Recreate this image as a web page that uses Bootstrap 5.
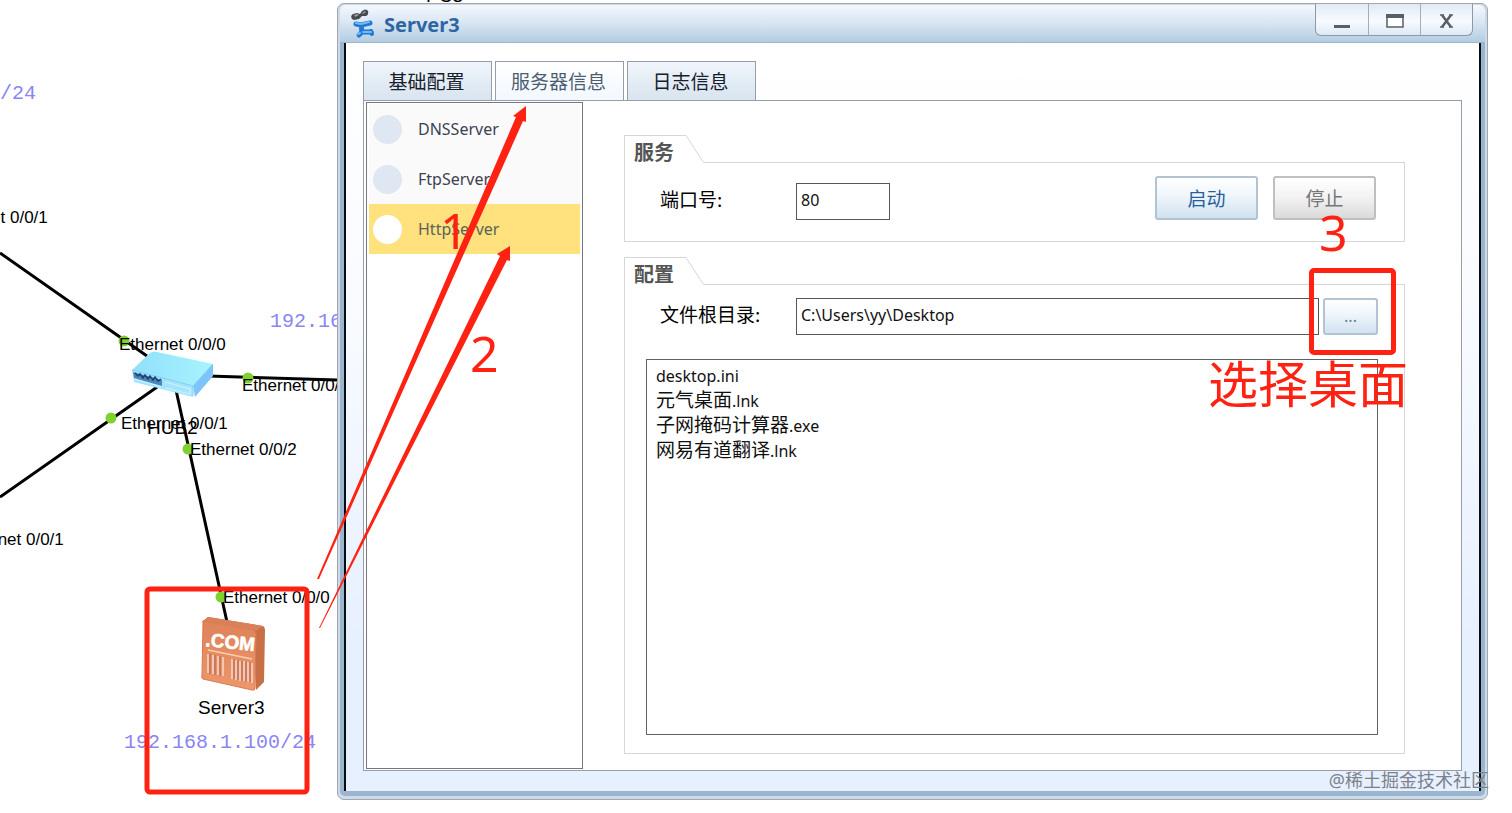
<!DOCTYPE html>
<html lang="zh-CN">
<head>
<meta charset="utf-8">
<meta name="viewport" content="width=device-width, initial-scale=1">
<title>Server3</title>
<link href="https://cdn.jsdelivr.net/npm/bootstrap@5.3.0/dist/css/bootstrap.min.css" rel="stylesheet">
<style>
  body { font-family: "Noto Sans", "Noto Sans CJK SC", sans-serif; font-size: 16px; line-height: 25px; color: #111; background: #fff; }
  .cjk { font-family: "Noto Sans CJK SC", sans-serif; font-size: 19px; line-height: 25px; }
  .latin { font-family: "Noto Sans", sans-serif; font-size: 16px; line-height: 16px; }
  .desk { padding: 3px 24px 13px 337px; }
  .topology, .marks { position: absolute; left: 0; top: 0; pointer-events: none; }
  .topology text { font-family: "Liberation Sans", sans-serif; font-size: 17px; }
  .topology .device { font-size: 19px; }
  .topology .addr { font-family: "Liberation Mono", monospace; font-size: 20px; fill: #8a85f2; }
  .topology .sign { font-size: 19px; font-weight: 700; }
  .marks text { font-family: "Noto Sans", sans-serif; font-size: 50px; }
  .marks { z-index: 5; fill: #ff2213; }

  .win { border: 1px solid #a0a7af; border-radius: 7px; background: #cddbe8; padding: 1px 2px 3px; }
  .win-inner { background: #9ab5cd; padding: 0 4px 5px; border-radius: 5px; }
  .titlebar { height: 38px; margin: 0 -4px; padding-left: 10px; border-radius: 5px 5px 0 0; background: linear-gradient(#f4f8fd, #dbe7f3 45%, #b2cde2); border-bottom: 1px solid #9fb6c9; }
  .titlebar h1 { font-size: 20px; line-height: 39px; font-weight: 700; color: #2e66a3; }
  .caption { height: 32px; margin: -1px 12px 0 0; border: 1px solid #8f99a5; border-top: 0; border-radius: 0 0 6px 6px; background: linear-gradient(#dfeaf5, #f8fbff 55%, #dce9f5); }
  .caption button { width: 52px; border: 0; padding: 0; background: none; }
  .caption button + button { border-left: 1px solid #a4adb8; }
  .client { border: solid #080d12; border-width: 0 2px; padding: 18px 17px 20px; background: linear-gradient(#fff, #f7faff 40%, #e7f0ff 80%); }

  .tabs { gap: 3px; }
  .tabs .nav-link { width: 129px; height: 39px; padding: 0 2px 2px 0; border: 1px solid #989daa; border-bottom: 0; border-radius: 0; color: #16202c; background: linear-gradient(#f0f5fa, #d8e4f0); }
  .tabs .nav-link.active { color: #4c5d70; background: linear-gradient(#fff, #f2f8ff); }
  .pane { border: 1px solid #989da7; background: #fff; }
  .side { width: 217px; margin: 1px 0 1px 2px; border: 1px solid #74777f; border-radius: 0; padding: 1px 2px; flex: none; }
  .side .list-group-item { height: 50px; padding: 0 4px; gap: 16px; border: 0; border-radius: 0; background: #fafafb; color: #3c4250; }
  .side .list-group-item.active { background: #ffe17d; color: #5b6359; margin: 0; }
  .dot { width: 29px; height: 29px; border-radius: 50%; background: #dfe7f2; }
  .active .dot { background: #fff; }

  .forms { padding: 34px 56px 16px 41px; gap: 15px; }
  .group-head { height: 28px; }
  .group-name { width: 62px; padding: 3px 0 0 9px; border: solid #d6d6d6; border-width: 1px 0 0 1px; font-weight: 700; color: #555; white-space: nowrap; }
  .group-name.cjk { font-size: 20px; }
  .group-rule { border-bottom: 1px solid #d6d6d6; }
  .group-body { border: 1px solid #d6d6d6; border-top: 0; padding: 13px 26px 18px 21px; }
  .group-body.service { padding-bottom: 20px; padding-right: 28px; }
  .field-name { width: 150px; padding-left: 14px; line-height: 32px; flex: none; color: #000; }
  .field { height: 37px; padding: 0 4px 3px; border: 1px solid #55575c; border-radius: 0; font-size: 16px; color: #111; background: #fff; }
  .field.port { width: 94px; margin-top: 7px; }
  .port-name { line-height: 45px; }
  .btn-soft { width: 103px; height: 44px; padding: 0 0 2px; border: 2px solid #b3c3d2; border-radius: 3px; color: #275f9d; background: linear-gradient(#fff, #f1f7fb 40%, #d1e2f0); }
  .btn-soft:disabled { opacity: 1; border-color: #bfbfbf; color: #777; background: linear-gradient(#fff, #f2f2f2 50%, #dadada); }
  .btn-browse { width: 55px; height: 37px; font-size: 16px; color: #5d7f9e; display: block; }
  .button-pair { gap: 15px; }
  .files { min-height: 200px; margin-top: 24px; padding: 1px 9px; border: 1px solid #5f6166; }
  .files li { height: 25px; }
  .red-box { position: absolute; left: -14px; top: -30px; width: 87px; height: 87px; border: 5px solid #ff2213; border-radius: 5px; pointer-events: none; }
  .red-num, .red-note { position: absolute; color: #ff2213; font-size: 50px; line-height: 50px; white-space: nowrap; pointer-events: none; }
  .red-num { left: -4px; top: -91px; }
  .red-note { right: -30px; top: 61px; }
  .watermark { position: absolute; right: 23px; bottom: 20px; font-size: 18px; color: #7c828c; white-space: nowrap; z-index: 6; }
</style>
</head>
<body>
<main class="desk position-relative min-vh-100 d-flex overflow-hidden">

  <svg class="topology" width="520" height="813" viewBox="0 0 520 813" role="img" aria-label="网络拓扑">
    <defs>
      <linearGradient id="hubTop" x1="0" x2="1"><stop stop-color="#8fe0fa"/><stop offset="1" stop-color="#a8f3ff"/></linearGradient>
      <linearGradient id="box" x1="0" y1="0" x2="0" y2="1"><stop stop-color="#dd8259"/><stop offset="1" stop-color="#ee976b"/></linearGradient>
    </defs>
    <g stroke="#000" stroke-width="3">
      <path d="M0 253 147 356M0 497 160 385M176 390 227 622M208 376 337 380"/>
    </g>
    <g fill="#7ed12f">
      <circle cx="124" cy="341" r="5.500"/><circle cx="248" cy="378" r="5.500"/><circle cx="111" cy="418" r="5.500"/>
      <circle cx="188" cy="449" r="5.500"/><circle cx="221" cy="597" r="5.500"/>
    </g>
    <g>
      <path fill="url(#hubTop)" d="M132 370 150 353Q153 351 157 352L213 364 193 387Z"/>
      <path fill="#a5e4fd" d="M132 370 193 386 193 397 134 382Z"/>
      <path fill="#7cc4fa" d="M193 386 213 364V376L195 397Z"/>
      <path fill="none" stroke="#86cdf2" d="M132 370 193 386 213 364M193 386V396"/>
      <path fill="#4a86b8" d="M133 372 162 380V386L134 378Z"/>
      <path fill="none" stroke="#1d3f70" stroke-width="1.500" d="M135 373l3 3 2-2 3 4 2-3 3 4 2-3 3 4 2-3 3 4 3-2"/>
      <path fill="none" stroke="#d0f3ff" d="M134 379 162 387M165 382 190 389V394L165 388"/>
    </g>
    <g>
      <path fill="#c96f45" d="M202 622 208 617 263 626Q265 627 265 630L264 682 256 690 253 634Z"/>
      <path fill="url(#box)" stroke="#d97a50" d="M203 622Q202 620 205 621L253 630Q256 631 256 634L255 688Q255 691 252 690L203 679Q201 678 202 674Z"/>
      <path fill="#d98058" d="M203 621 208 617 263 626 256 631Z"/>
      <text class="sign" x="205" y="646" fill="#fff" stroke="#fff" stroke-width=".6" transform="rotate(6 205 646)">.COM</text>
      <path fill="none" stroke="#f9cdb5" stroke-width="1.500" d="M208 650 252 659"/>
      <path stroke="#f5c6b4" stroke-width="2" d="M208 654V673M213 655V674M218 656V675M223 657V676"/>
      <path stroke="#ae6653" d="M210 654V674M215 655V675M220 656V676"/>
      <path stroke="#f5c6b4" stroke-width="2" d="M232 659V679M236 660V680M240 661V681M244 661V681M248 662V682M252 663V683"/>
      <path stroke="#ae6653" d="M234 659V679M238 660V680M242 661V681M246 662V682M250 662V682"/>
    </g>
    <g fill="#000">
      <text x="-59" y="223">Ethernet 0/0/1</text>
      <text x="119" y="350">Ethernet 0/0/0</text>
      <text x="242" y="391">Ethernet 0/0/0</text>
      <text x="121" y="429">Ethernet 0/0/1</text>
      <text x="190" y="455">Ethernet 0/0/2</text>
      <text x="-43" y="545">Ethernet 0/0/1</text>
      <text x="223" y="603">Ethernet 0/0/0</text>
      <text class="device" x="147" y="434">HUB2</text>
      <text class="device" x="198" y="714">Server3</text>
      <text class="device" x="426" y="2">PC3</text>
    </g>
    <text class="addr" x="0" y="99">/24</text>
    <text class="addr" x="270" y="327">192.168</text>
    <text class="addr" x="124" y="748">192.168.1.100/24</text>
  </svg>

  <section class="win position-relative flex-grow-1 d-flex">
    <div class="win-inner flex-grow-1 d-flex flex-column">
      <header class="titlebar d-flex align-items-start">
        <svg width="26" height="30" viewBox="0 0 26 30" class="mt-1 me-1 flex-shrink-0" aria-hidden="true">
          <path fill="#45484c" d="M2 10Q0 7 3 5L7 4 10 5 12 2Q16 -1 18 2 19 6 16 7L12 7 9 10 4 11Z"/>
          <path fill="#9a9da0" d="M4 6 7 5 9 6 5 8ZM12 4 15 2 16 3 13 5Z"/>
          <path fill="none" stroke="#2378d2" stroke-width="5" stroke-linejoin="round" stroke-linecap="round" d="M6 15 11 16 20 14M11 16 12 23 21 23M12 23 9 26"/>
          <path fill="none" stroke="#2378d2" stroke-width="4" stroke-linecap="round" d="M21 22 22 25"/>
          <path fill="none" stroke="#72bbf8" stroke-width="2" stroke-linecap="round" d="M6 14 11 15 19 13M13 23 21 23M8 25 10 24"/>
        </svg>
        <h1 class="m-0 ms-1 flex-grow-1">Server3</h1>
        <div class="caption d-flex">
          <button type="button" aria-label="最小化"><svg width="18" height="18" viewBox="0 0 18 18"><path fill="#5a5f66" d="M1 13h16v3H1z"/></svg></button>
          <button type="button" aria-label="最大化"><svg width="18" height="18" viewBox="0 0 18 18"><path fill="#fff" stroke="#5a5f66" stroke-width="1.500" d="M1 4h16v11H1z"/><path fill="#5a5f66" d="M0 2h18v4H0z"/></svg></button>
          <button type="button" aria-label="关闭"><svg width="18" height="18" viewBox="0 0 18 18"><path fill="none" stroke="#5a5f66" stroke-width="2.500" d="M4 3 13 15M13 3 4 15"/><path stroke="#5a5f66" stroke-width="1.500" d="M2 3h4M11 3h4M2 15h4M11 15h4"/></svg></button>
        </div>
      </header>

      <div class="client flex-grow-1 d-flex flex-column">
        <nav class="tabs nav cjk" role="tablist">
          <button type="button" class="nav-link" role="tab">基础配置</button>
          <button type="button" class="nav-link active" role="tab" aria-selected="true">服务器信息</button>
          <button type="button" class="nav-link" role="tab">日志信息</button>
        </nav>

        <div class="pane flex-grow-1 d-flex">
          <div class="side list-group">
            <a href="#dns" class="list-group-item d-flex align-items-center"><span class="dot"></span>DNSServer</a>
            <a href="#ftp" class="list-group-item d-flex align-items-center"><span class="dot"></span>FtpServer</a>
            <a href="#http" class="list-group-item active d-flex align-items-center"><span class="dot"></span>HttpServer</a>
          </div>

          <form class="forms flex-grow-1 d-flex flex-column">
            <section>
              <div class="group-head d-flex">
                <div class="group-name cjk">服务</div>
                <svg width="18" height="28" viewBox="0 0 18 28" aria-hidden="true"><path fill="none" stroke="#d6d6d6" d="M0 .5 17.500 27.500H18"/></svg>
                <div class="group-rule flex-grow-1"></div>
              </div>
              <div class="group-body service d-flex align-items-start">
                <label for="port" class="field-name port-name cjk">端口号:</label>
                <input id="port" class="field port" type="text" value="80">
                <div class="button-pair d-flex ms-auto">
                  <button type="button" class="btn btn-soft cjk">启动</button>
                  <button type="button" class="btn btn-soft cjk" disabled>停止</button>
                </div>
              </div>
            </section>

            <section class="flex-grow-1 d-flex flex-column">
              <div class="group-head d-flex">
                <div class="group-name cjk">配置</div>
                <svg width="18" height="28" viewBox="0 0 18 28" aria-hidden="true"><path fill="none" stroke="#d6d6d6" d="M0 .5 17.500 27.500H18"/></svg>
                <div class="group-rule flex-grow-1"></div>
              </div>
              <div class="group-body flex-grow-1 d-flex flex-column">
                <div class="d-flex">
                  <label for="root" class="field-name cjk">文件根目录:</label>
                  <input id="root" class="field flex-grow-1" type="text" value="C:\Users\yy\Desktop">
                  <div class="position-relative ms-1">
                    <button type="button" class="btn btn-soft btn-browse">...</button>
                    <span class="red-box"></span>
                    <span class="red-num">3</span>
                    <span class="red-note">选择桌面</span>
                  </div>
                </div>
                <ul class="files list-unstyled mb-0 flex-grow-1 cjk">
                  <li><span class="latin">desktop.ini</span></li>
                  <li>元气桌面<span class="latin">.lnk</span></li>
                  <li>子网掩码计算器<span class="latin">.exe</span></li>
                  <li>网易有道翻译<span class="latin">.lnk</span></li>
                </ul>
              </div>
            </section>
          </form>
        </div>
      </div>
    </div>
  </section>

  <svg class="marks" width="560" height="813" viewBox="0 0 560 813" aria-hidden="true">
    <path d="M317 579 516 117 513 116 526 106 526 122 523 121 319 579Z"/>
    <path d="M319 628 500 256 497 254 510 246 510 261 507 260 320 628Z"/>
    <rect x="147" y="589" width="160" height="203" rx="3" fill="none" stroke="#ff2213" stroke-width="5"/>
    <text x="440" y="249">1</text>
    <text x="470" y="372">2</text>
  </svg>

  <span class="watermark">@稀土掘金技术社区</span>
</main>
<script src="https://cdn.jsdelivr.net/npm/bootstrap@5.3.0/dist/js/bootstrap.bundle.min.js"></script>
</body>
</html>
